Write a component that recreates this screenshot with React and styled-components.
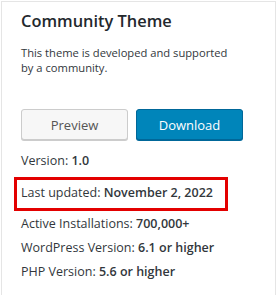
import React from "react"
import styled, { createGlobalStyle } from "styled-components"

const Global = createGlobalStyle`
  body {
    margin: 0;
    background: #fff;
    font-family: "Open Sans", "Liberation Sans", sans-serif;
    color: #23282d;
  }
`

const Card = styled.div`
  margin: 1px 0 0 1px;
  width: 275px;
  height: 310px;
  border: 1px solid #e5e5e5;
  box-sizing: border-box;
  padding: 8px 19px 0 19px;
`

const Title = styled.h2`
  margin: 0 0 13px;
  font-size: 16.4px;
  font-weight: 600;
  line-height: 22px;
  color: #23282d;
`

const Description = styled.p`
  max-width: 215px;
  margin: 0 0 34px;
  font-size: 11.2px;
  line-height: 15px;
  color: #32373c;
`

const Actions = styled.div`
  display: flex;
  gap: 8px;
  margin-bottom: 12px;
`

const Button = styled.button`
  width: 107px;
  height: 31px;
  box-sizing: border-box;
  border-radius: 3px;
  font-family: inherit;
  font-size: 13px;
  cursor: pointer;
  border: 1px solid ${p => (p.$primary ? "#006799" : "#ccc")};
  background: ${p => (p.$primary ? "#0085ba" : "#f7f7f7")};
  color: ${p => (p.$primary ? "#fff" : "#555")};
  box-shadow: ${p => (p.$primary ? "0 1px 0 #006799" : "0 1px 0 #ccc")};
`

const Meta = styled.ul`
  list-style: none;
  display: flex;
  flex-direction: column;
  gap: 6px;
  margin: 0 0 0 -7px;
  padding: 0;
`

const Item = styled.li`
  font-size: 12.5px;
  line-height: 18px;
  padding: ${p => (p.$highlight ? "4px 4px 6px" : "0 7px")};
  margin: ${p => (p.$highlight ? "1px 0 -2px" : "0")};
  border: ${p => (p.$highlight ? "3px solid #e30000" : "none")};
  width: ${p => (p.$highlight ? "214px" : "auto")};
  box-sizing: border-box;
  white-space: nowrap;
  color: #32373c;

  & > strong {
    font-weight: 600;
  }
`

const details = [
  ["Version", "1.0"],
  ["Last updated", "November 2, 2022", true],
  ["Active Installations", "700,000+"],
  ["WordPress Version", "6.1 or higher"],
  ["PHP Version", "5.6 or higher"],
]

const App = () => {
  return (
    <>
      <Global />
      <Card>
        <Title>Community Theme</Title>
        <Description>
          This theme is developed and supported by a community.
        </Description>
        <Actions>
          <Button>Preview</Button>
          <Button $primary>Download</Button>
        </Actions>
        <Meta>
          {details.map(([label, value, highlight]) => (
            <Item key={label} $highlight={highlight}>
              {label}: <strong>{value}</strong>
            </Item>
          ))}
        </Meta>
      </Card>
    </>
  )
}

export default App
